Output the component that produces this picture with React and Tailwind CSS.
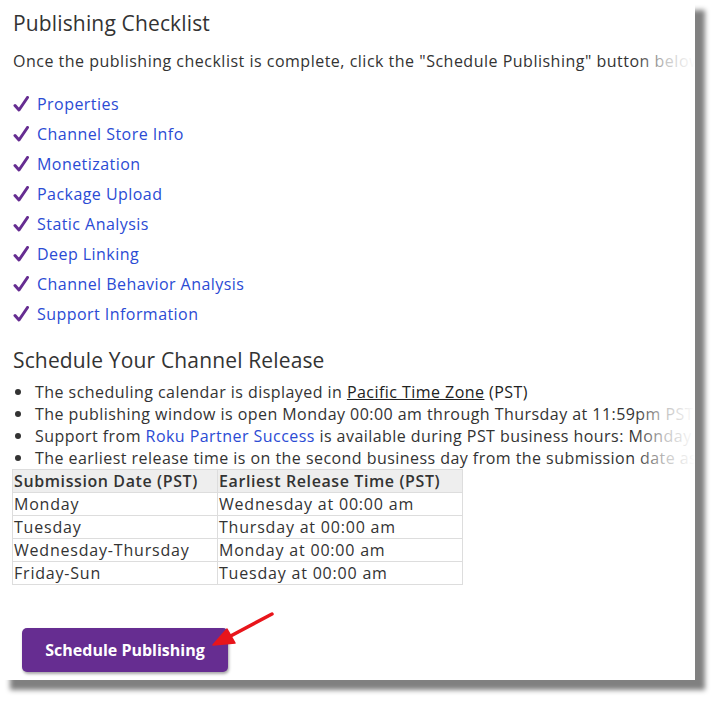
import React from 'react'

const checklist = [
  'Properties',
  'Channel Store Info',
  'Monetization',
  'Package Upload',
  'Static Analysis',
  'Deep Linking',
  'Channel Behavior Analysis',
  'Support Information',
]

const schedule = [
  ['Monday', 'Wednesday at 00:00 am'],
  ['Tuesday', 'Thursday at 00:00 am'],
  ['Wednesday-Thursday', 'Monday at 00:00 am'],
  ['Friday-Sun', 'Tuesday at 00:00 am'],
]

function Check() {
  return (
    <svg width="16" height="16" viewBox="0 0 16 16" className="shrink-0">
      <path d="M2 9.5 L6 14 L14.5 1.5" fill="none" stroke="#662d91" strokeWidth="3" strokeLinecap="round" strokeLinejoin="round" />
    </svg>
  )
}

function Bullet({ children }) {
  return (
    <li className="flex items-center">
      <span className="w-[22px] shrink-0 flex pl-[2px]">
        <span className="w-[6px] h-[6px] rounded-full bg-[#333]" />
      </span>
      <span>{children}</span>
    </li>
  )
}

export default function App() {
  return (
    <div className="w-[720px] h-[702px] bg-white" style={{ fontFamily: '"Open Sans", "Liberation Sans", sans-serif' }}>
      <div className="relative w-[695px] h-[680px] bg-white overflow-hidden shadow-[10px_10px_5px_#808080] text-[#333333]">
        <div className="pl-[13px] pt-[11px] whitespace-nowrap">
          <h2 className="text-[21px] leading-[24px] tracking-[0.15px]">Publishing Checklist</h2>
          <p className="mt-[15px] text-[16px] leading-[22px] tracking-[0.5px]">
            Once the publishing checklist is complete, click the "Schedule Publishing" button below
          </p>

          <ul className="mt-[17px]">
            {checklist.map(item => (
              <li key={item} className="flex items-center gap-[8px] h-[30px] text-[16px] tracking-[0.45px]">
                <Check />
                <a className="text-[#2b4bd4]">{item}</a>
              </li>
            ))}
          </ul>

          <h2 className="mt-[19px] text-[21px] leading-[24px] tracking-[0.15px]">Schedule Your Channel Release</h2>
          <ul className="mt-[9px] text-[16px] leading-[22px] tracking-[0.45px]">
            <Bullet>
              The scheduling calendar is displayed in <span className="underline font-medium text-[#222]">Pacific Time Zone</span> <span className="font-medium text-[#222]">(PST)</span>
            </Bullet>
            <Bullet>The publishing window is open Monday 00:00 am through Thursday at 11:59pm PST</Bullet>
            <Bullet>
              Support from <a className="text-[#2b4bd4]">Roku Partner Success</a> is available during PST business hours: Monday
            </Bullet>
            <Bullet>The earliest release time is on the second business day from the submission date as</Bullet>
          </ul>

          <table className="-ml-[1px] w-[451px] border-collapse text-[16px] tracking-[0.8px]">
            <thead>
              <tr className="bg-[#eeeeee] h-[23px]">
                <th className="w-[205px] border border-[#dddddd] px-[1px] text-left font-semibold tracking-[0.6px] leading-[21px]">Submission Date (PST)</th>
                <th className="border border-[#dddddd] px-[1px] text-left font-semibold tracking-[0.6px] leading-[21px]">Earliest Release Time (PST)</th>
              </tr>
            </thead>
            <tbody>
              {schedule.map(([day, time]) => (
                <tr key={day} className="h-[23px]">
                  <td className="border border-[#dddddd] px-[1px] leading-[21px]">{day}</td>
                  <td className="border border-[#dddddd] px-[1px] leading-[21px]">{time}</td>
                </tr>
              ))}
            </tbody>
          </table>

          <button className="mt-[43px] ml-[9px] w-[206px] h-[44px] rounded-[5px] bg-[#662d91] text-white text-[16px] font-bold shadow-[1px_2px_3px_rgba(0,0,0,0.35)]">
            Schedule Publishing
          </button>
        </div>

        <div className="absolute top-0 right-0 h-full w-[60px] bg-gradient-to-r from-white/0 via-white/70 to-white pointer-events-none" />

        <svg className="absolute left-[205px] top-[605px]" width="80" height="50" viewBox="0 0 80 50">
          <path d="M67 9 L20 34" stroke="#e8151b" strokeWidth="3.5" strokeLinecap="round" />
          <path d="M8 40 L22 24 L30 38 Z" fill="#e8151b" stroke="#e8151b" strokeWidth="1.5" strokeLinejoin="round" />
        </svg>
      </div>
    </div>
  )
}
